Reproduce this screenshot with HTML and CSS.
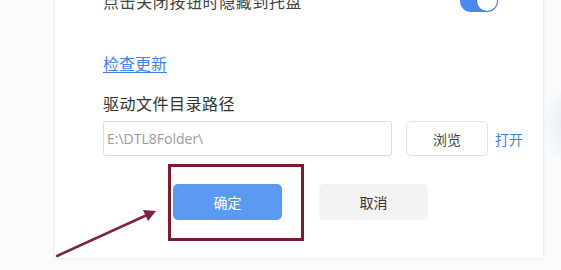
FILE: index.html
```html
<!DOCTYPE html>
<html lang="zh-CN">
<head>
  <meta charset="UTF-8" />
  <meta name="viewport" content="width=device-width, initial-scale=1.0"/>
  <title>设置</title>
  <link rel="stylesheet" href="styles.css">
</head>
<body>
  <div class="stage">
    <div class="swoosh"></div>

    <div class="panel">
      <div class="tray-row">
        <span class="tray-text">点击关闭按钮时隐藏到托盘</span>
        <span class="toggle"><span class="knob"></span></span>
      </div>

      <div class="update-row">
        <a class="link update-link" href="#">检查更新</a>
      </div>

      <div class="field-label">驱动文件目录路径</div>
      <div class="path-row">
        <input class="path-input" type="text" value="E:\DTL8Folder\" readonly>
        <button class="browse-btn">浏览</button>
        <a class="link open-link" href="#">打开</a>
      </div>

      <div class="actions">
        <button class="btn btn-primary">确定</button>
        <button class="btn btn-cancel">取消</button>
      </div>
    </div>

    <!-- annotation -->
    <div class="mark-box"></div>
    <svg class="mark-arrow" width="561" height="270" viewBox="0 0 561 270">
      <line x1="57" y1="256" x2="147" y2="215" stroke="#7b2346" stroke-width="2.5" stroke-linecap="round"/>
      <polygon points="156,211 143,210 148,221" fill="#7b2346"/>
    </svg>
  </div>
</body>
</html>
```

FILE: styles.css
```css
* {
  margin: 0;
  padding: 0;
  box-sizing: border-box;
}

body {
  font-family: 'Noto Sans CJK SC', 'Open Sans', sans-serif;
  background: #fafbfc;
  color: #333;
}

.stage {
  position: relative;
  width: 561px;
  height: 270px;
  overflow: hidden;
}

.swoosh {
  position: absolute;
  left: 540px;
  top: 80px;
  width: 80px;
  height: 90px;
  border-radius: 50%;
  background: radial-gradient(ellipse at 60% 50%, rgba(190, 220, 235, 0.9) 0%, rgba(220, 236, 244, 0.5) 45%, rgba(250, 251, 252, 0) 70%);
}

.panel {
  position: relative;
  margin-left: 55px;
  margin-top: -30px;
  width: 488px;
  height: 288px;
  padding: 20px 0 0 48px;
  background: #fff;
  box-shadow: 0 0 3px rgba(0, 0, 0, 0.12);
}

.tray-row {
  display: flex;
  justify-content: space-between;
  align-items: center;
  height: 22px;
  margin-right: 45px;
}

.tray-text {
  font-size: 16px;
  letter-spacing: 0.6px;
  color: #444;
}

.toggle {
  display: flex;
  justify-content: flex-end;
  align-items: center;
  width: 38px;
  height: 22px;
  padding: 1px;
  border-radius: 11px;
  background: #4a89ef;
}

.knob {
  width: 20px;
  height: 20px;
  border-radius: 50%;
  background: #fff;
  box-shadow: 0 0 2px rgba(0, 0, 0, 0.35);
}

.link {
  color: #3f82e4;
}

.update-row {
  margin-top: 41px;
  line-height: 20px;
}

.update-link {
  font-size: 16px;
  text-decoration: underline;
  text-underline-offset: 2px;
}

.field-label {
  margin-top: 20px;
  font-size: 16px;
  line-height: 20px;
  letter-spacing: 0.5px;
  color: #333;
}

.path-row {
  display: flex;
  align-items: center;
  margin-top: 8px;
}

.path-input {
  flex-shrink: 0;
  width: 289px;
  height: 35px;
  padding: 0 3px;
  border: 1px solid #dcdcdc;
  border-radius: 3px;
  font-family: 'Open Sans', sans-serif;
  font-size: 14px;
  color: #9a9a9a;
  outline: none;
}

.browse-btn {
  flex-shrink: 0;
  width: 82px;
  height: 35px;
  margin-left: 14px;
  border: 1px solid #e2e2e2;
  border-radius: 5px;
  background: #fff;
  font-family: inherit;
  font-size: 14px;
  color: #444;
}

.open-link {
  margin-left: 7px;
  font-size: 14px;
  white-space: nowrap;
  text-decoration: none;
}

.actions {
  display: flex;
  gap: 37px;
  margin-top: 28px;
  padding-left: 70px;
}

.btn {
  width: 109px;
  height: 36px;
  border: none;
  border-radius: 5px;
  font-family: inherit;
  font-size: 14px;
}

.btn-primary {
  background: #5b9af1;
  color: #fff;
}

.btn-cancel {
  background: #f3f3f3;
  color: #333;
}

.mark-box {
  position: absolute;
  left: 168px;
  top: 164px;
  width: 136px;
  height: 77px;
  border: 3px solid #7d1b2c;
}

.mark-arrow {
  position: absolute;
  left: 0;
  top: 0;
}
```
